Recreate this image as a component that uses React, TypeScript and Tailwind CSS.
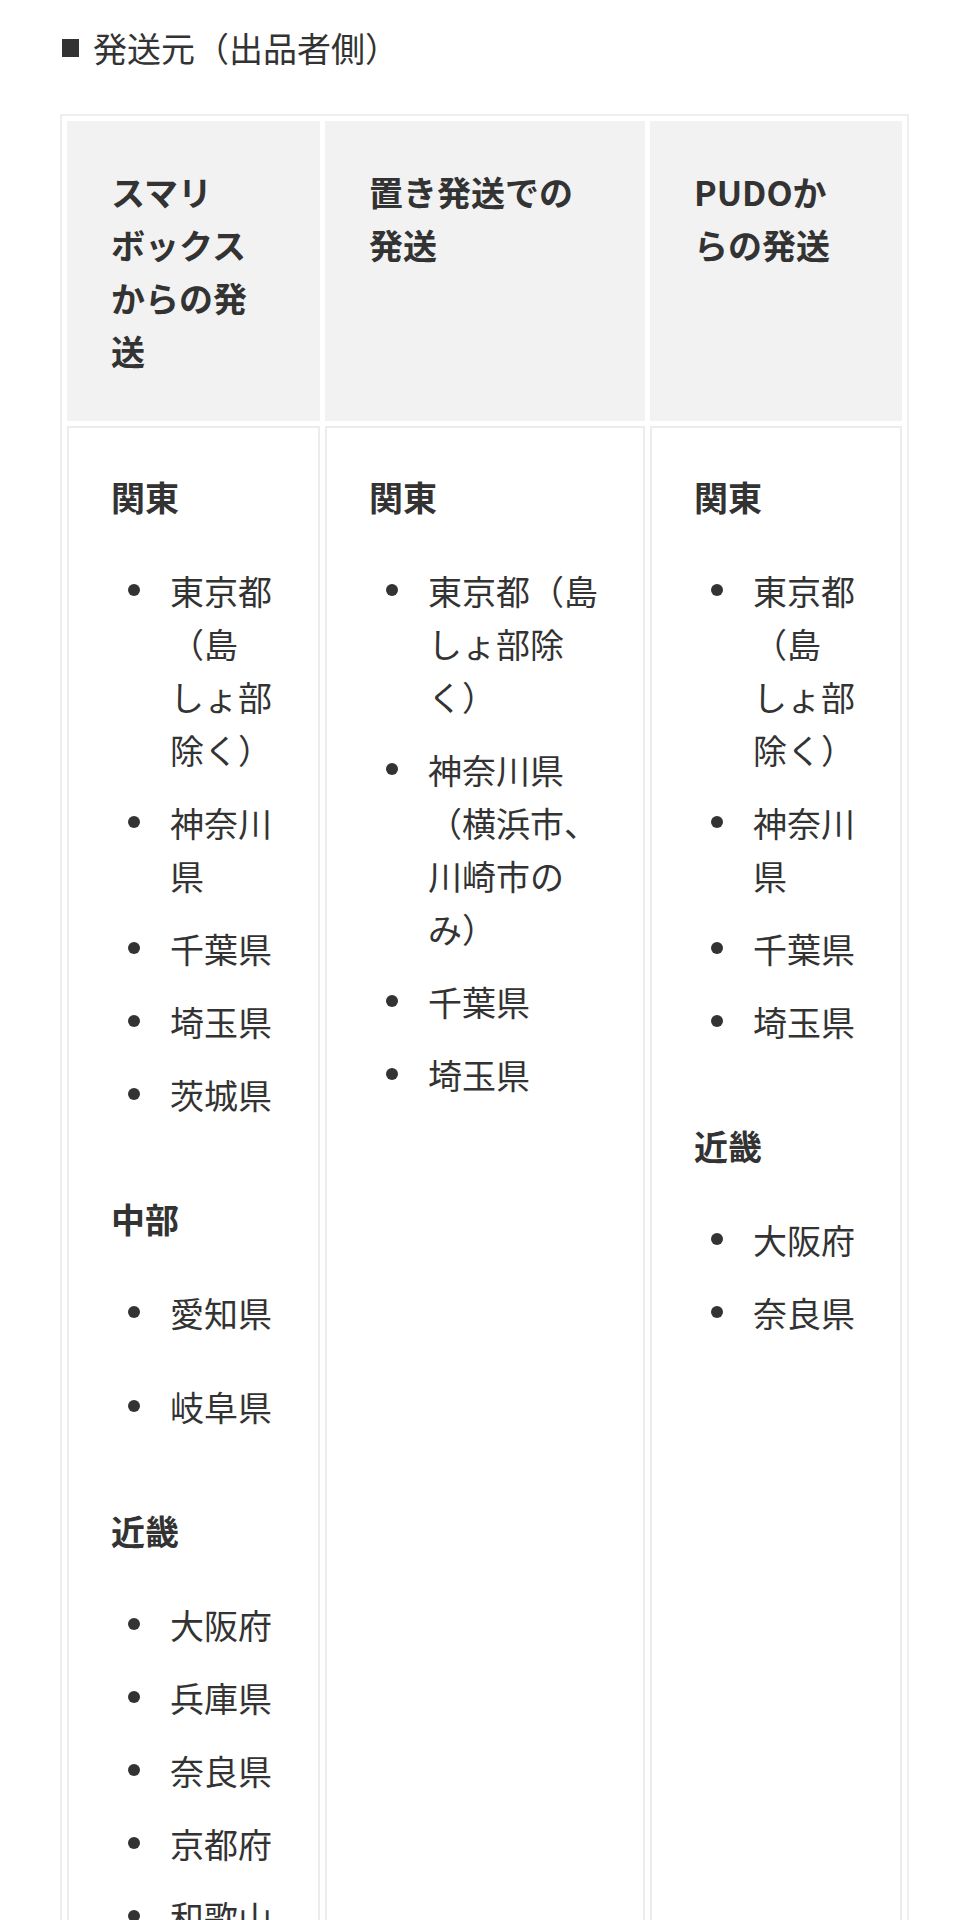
import React from "react";

type Group = { title: string; items: string[]; loose?: boolean };

const COLUMNS: { head: string; width: string; groups: Group[] }[] = [
  {
    head: "スマリボックスからの発送",
    width: "w-[253px]",
    groups: [
      { title: "関東", items: ["東京都（島しょ部除く）", "神奈川県", "千葉県", "埼玉県", "茨城県"] },
      { title: "中部", items: ["愛知県", "岐阜県"], loose: true },
      { title: "近畿", items: ["大阪府", "兵庫県", "奈良県", "京都府", "和歌山県", "滋賀県"] },
    ],
  },
  {
    head: "置き発送での発送",
    width: "",
    groups: [
      {
        title: "関東",
        items: ["東京都（島しょ部除く）", "神奈川県（横浜市、川崎市のみ）", "千葉県", "埼玉県"],
      },
    ],
  },
  {
    head: "PUDOからの発送",
    width: "w-[252px]",
    groups: [
      { title: "関東", items: ["東京都（島しょ部除く）", "神奈川県", "千葉県", "埼玉県"] },
      { title: "近畿", items: ["大阪府", "奈良県"] },
    ],
  },
];

function RegionList({ group, last }: { group: Group; last: boolean }) {
  return (
    <div>
      <p className="font-bold">{group.title}</p>
      <ul
        className={`mt-[41px] flex flex-col ${group.loose ? "gap-[41px]" : "gap-[20px]"} ${
          last ? "mb-0" : "mb-[71px]"
        }`}
      >
        {group.items.map((item) => (
          <li key={item} className="flex">
            <span className="mt-[20px] ml-[17px] mr-[30px] h-[12px] w-[12px] shrink-0 rounded-full bg-[#333]" />
            <span className="min-w-0 flex-1">{item}</span>
          </li>
        ))}
      </ul>
    </div>
  );
}

export default function App() {
  return (
    <div
      lang="ja"
      className="min-h-screen bg-white px-[60px] pt-[21px] text-[34px] leading-[53px] text-[#333] [line-break:strict]"
      style={{ fontFamily: '"Noto Sans CJK JP", "Noto Sans", sans-serif' }}
    >
      <h2 className="flex items-center font-normal">
        <span className="mr-[14px] ml-[2px] inline-block h-[18px] w-[17px] bg-[#333]" />
        発送元（出品者側）
      </h2>

      <table className="mt-[40px] w-full table-fixed border-separate border-spacing-[5px] border-2 border-[#eeeeee]">
        <thead>
          <tr>
            {COLUMNS.map((col) => (
              <th
                key={col.head}
                className={`${col.width} border-2 border-[#f2f2f2] bg-[#f2f2f2] p-[42px] text-left align-top font-bold`}
              >
                {col.head}
              </th>
            ))}
          </tr>
        </thead>
        <tbody>
          <tr>
            {COLUMNS.map((col) => (
              <td key={col.head} className="border-2 border-[#ececec] p-[42px] align-top">
                {col.groups.map((g, i) => (
                  <RegionList key={g.title} group={g} last={i === col.groups.length - 1} />
                ))}
              </td>
            ))}
          </tr>
        </tbody>
      </table>
    </div>
  );
}
